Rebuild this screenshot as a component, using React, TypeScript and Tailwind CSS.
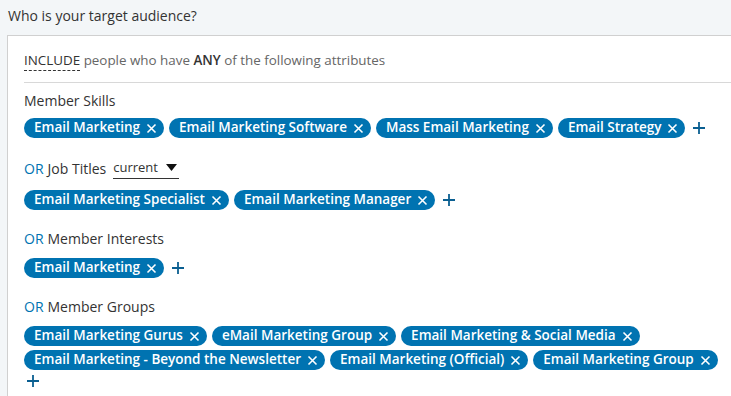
import React from 'react';

const font = { fontFamily: '"Open Sans", "Noto Sans", sans-serif' };

interface ChipRowProps {
  items: string[];
}

function Chip({ label }: { label: string }) {
  return (
    <span className="inline-flex items-center h-[20px] rounded-full bg-[#0073b1] pl-[10px] pr-[7px] text-[13.5px] font-semibold leading-none text-white whitespace-nowrap">
      {label}
      <svg className="ml-[6px]" width="11" height="11" viewBox="0 0 11 11">
        <path d="M1.5 1.5 L9.5 9.5 M9.5 1.5 L1.5 9.5" stroke="white" strokeWidth="1.6" />
      </svg>
    </span>
  );
}

function Plus() {
  return (
    <svg width="14" height="14" viewBox="0 0 14 14" className="shrink-0">
      <path d="M7 1 V13 M1 7 H13" stroke="#0a5f91" strokeWidth="1.8" />
    </svg>
  );
}

/**
 * 태그 목록 + 추가 버튼
 */
function ChipRow({ items }: ChipRowProps) {
  return (
    <div className="flex flex-wrap items-center gap-x-[5px] gap-y-[4px]">
      {items.map(item => (
        <Chip key={item} label={item} />
      ))}
      <span className="ml-[2px] flex items-center">
        <Plus />
      </span>
    </div>
  );
}

function Label({ or, children }: { or?: boolean; children: React.ReactNode }) {
  return (
    <div className="flex items-center text-[14px] text-[#333] h-[20px]">
      {or && <span className="text-[#0073b1] mr-[4px]">OR</span>}
      {children}
    </div>
  );
}

export default function App() {
  return (
    <div className="w-[731px] h-[396px] overflow-hidden bg-[#f3f6f8]" style={font}>
      <div className="pl-[8px] pt-[5px] h-[35px] text-[14px] text-[#333]">Who is your target audience?</div>

      <div className="ml-[7px] border-l border-t border-[#d0d0d0] bg-white pl-[16px] h-[400px]">
        {/* INCLUDE 문구 */}
        <div className="pt-[14px] pb-[12px] border-b border-[#d8d8d8] text-[13.4px] text-[#666]">
          <span className="text-[#333] border-b border-dashed border-[#333] pb-[1px]">INCLUDE</span>{' '}
          people who have <span className="text-[#333] font-semibold">ANY</span> of the following attributes
        </div>

        <div className="pt-[7px]">
          <Label>Member Skills</Label>
          <div className="mt-[8px]">
            <ChipRow items={['Email Marketing', 'Email Marketing Software', 'Mass Email Marketing', 'Email Strategy']} />
          </div>
        </div>

        <div className="pt-[20px]">
          <Label or>
            Job Titles
            <span className="ml-[7px] inline-flex items-center border-b border-[#333] pr-[2px] h-[22px] text-[13px]">
              current
              <svg className="ml-[8px]" width="11" height="7" viewBox="0 0 11 7">
                <path d="M0 0 H11 L5.5 7 Z" fill="#111" />
              </svg>
            </span>
          </Label>
          <div className="mt-[12px]">
            <ChipRow items={['Email Marketing Specialist', 'Email Marketing Manager']} />
          </div>
        </div>

        <div className="pt-[18px]">
          <Label or>Member Interests</Label>
          <div className="mt-[10px]">
            <ChipRow items={['Email Marketing']} />
          </div>
        </div>

        <div className="pt-[18px]">
          <Label or>Member Groups</Label>
          <div className="mt-[10px] w-[700px]">
            <ChipRow
              items={[
                'Email Marketing Gurus',
                'eMail Marketing Group',
                'Email Marketing & Social Media',
                'Email Marketing - Beyond the Newsletter',
                'Email Marketing (Official)',
                'Email Marketing Group',
              ]}
            />
          </div>
        </div>
      </div>
    </div>
  );
}
